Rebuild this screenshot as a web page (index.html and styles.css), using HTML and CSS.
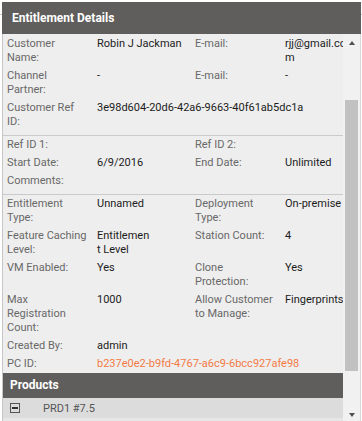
FILE: index.html
```html
<!DOCTYPE html>
<html lang="en">
<head>
  <meta charset="UTF-8">
  <title>Entitlement Details</title>
  <link rel="stylesheet" href="styles.css">
</head>
<body>
  <div class="panel">
    <div class="panel-header">Entitlement Details</div>

    <div class="panel-body">
      <div class="details">
        <div class="section first">
          <div class="row">
            <div class="label">Customer Name:</div>
            <div class="value">Robin J Jackman</div>
            <div class="label">E-mail:</div>
            <div class="value">rjj@gmail.com</div>
          </div>
          <div class="row">
            <div class="label">Channel Partner:</div>
            <div class="value">-</div>
            <div class="label">E-mail:</div>
            <div class="value">-</div>
          </div>
          <div class="row">
            <div class="label">Customer Ref ID:</div>
            <div class="value wide">3e98d604-20d6-42a6-9663-40f61ab5dc1a</div>
          </div>
        </div>

        <div class="section">
          <div class="row">
            <div class="label">Ref ID 1:</div>
            <div class="value"></div>
            <div class="label">Ref ID 2:</div>
            <div class="value"></div>
          </div>
          <div class="row">
            <div class="label">Start Date:</div>
            <div class="value">6/9/2016</div>
            <div class="label">End Date:</div>
            <div class="value">Unlimited</div>
          </div>
          <div class="row">
            <div class="label">Comments:</div>
            <div class="value wide"></div>
          </div>
        </div>

        <div class="section last">
          <div class="row">
            <div class="label">Entitlement Type:</div>
            <div class="value">Unnamed</div>
            <div class="label">Deployment Type:</div>
            <div class="value">On-premise</div>
          </div>
          <div class="row">
            <div class="label loose">Feature Caching Level:</div>
            <div class="value narrow">Entitlement Level</div>
            <div class="label">Station Count:</div>
            <div class="value">4</div>
          </div>
          <div class="row">
            <div class="label">VM Enabled:</div>
            <div class="value">Yes</div>
            <div class="label">Clone Protection:</div>
            <div class="value">Yes</div>
          </div>
          <div class="row">
            <div class="label">Max Registration Count:</div>
            <div class="value">1000</div>
            <div class="label">Allow Customer to Manage:</div>
            <div class="value">Fingerprints</div>
          </div>
          <div class="row">
            <div class="label">Created By:</div>
            <div class="value wide">admin</div>
          </div>
          <div class="row">
            <div class="label">PC ID:</div>
            <div class="value wide link">b237e0e2-b9fd-4767-a6c9-6bcc927afe98</div>
          </div>
        </div>

        <div class="products-header">Products</div>
        <div class="products">
          <div class="product">
            <span class="toggle"></span>
            <span class="product-name">PRD1 #7.5</span>
          </div>
        </div>
      </div>

      <div class="scrollbar">
        <div class="arrow up"></div>
        <div class="track"><div class="thumb"></div></div>
        <div class="arrow down"></div>
      </div>
    </div>
  </div>
</body>
</html>
```

FILE: styles.css
```css
html, body {
  height: 100%;
}

body {
  margin: 0;
  padding: 2px 0 0 2px;
  box-sizing: border-box;
  font-family: Roboto, "Liberation Sans", sans-serif;
  font-size: 11px;
  background: linear-gradient(to bottom, #fff 14px, #c9c9c9 14px, #c9c9c9 15px, #fff 15px);
  overflow: hidden;
}

.panel {
  width: 359px;
}

.panel-header {
  height: 32px;
  line-height: 32px;
  padding-left: 10px;
  background: #5f5e5c;
  color: #fff;
  font-weight: bold;
  font-size: 12px;
}

.panel-body {
  display: flex;
  height: 387px;
  background: #eeeeee;
  border-left: 1px solid #c6c6c6;
  border-right: 1px solid #d8d8d8;
}

.details {
  width: 340px;
  overflow: hidden;
}

.section {
  padding: 0 0 4px 4px;
  border-bottom: 1px solid #cacaca;
  width: 390px;
}

.section.first {
  padding-top: 1px;
}

.section.last {
  padding-bottom: 0;
  border-bottom: none;
}

.row {
  display: grid;
  grid-template-columns: 90px 98px 90px 66px;
  padding: 2px 0;
  line-height: 14px;
}

.label {
  color: #686868;
  padding-right: 11.3px;
}

.label.loose {
  padding-right: 4px;
}

.value {
  color: #1c1c1c;
  word-break: break-all;
}

.value.wide {
  grid-column: span 3;
}

.value.narrow {
  max-width: 54px;
}

.value.link {
  color: #f37a45;
}

.products-header {
  height: 25px;
  line-height: 25px;
  padding-left: 7px;
  background: #5f5e5c;
  color: #fff;
  font-weight: bold;
  font-size: 12px;
}

.products {
  background: #e6e6e6;
  height: 30px;
}

.product {
  display: flex;
  align-items: center;
  height: 20px;
  background: #dcdcdc;
  color: #555;
}

.toggle {
  position: relative;
  width: 8px;
  height: 8px;
  margin-left: 7px;
  border: 1px solid #555;
}

.toggle::after {
  content: "";
  position: absolute;
  left: 1px;
  right: 1px;
  top: 3px;
  height: 2px;
  background: #333;
}

.product-name {
  margin-left: 23px;
}

.scrollbar {
  width: 17px;
  display: flex;
  flex-direction: column;
  background: #f1f1f1;
}

.arrow {
  height: 17px;
  display: flex;
  align-items: center;
  justify-content: center;
}

.arrow::before {
  content: "";
  border-left: 3.5px solid transparent;
  border-right: 3.5px solid transparent;
}

.arrow.up::before {
  border-bottom: 4px solid #505050;
}

.arrow.down::before {
  border-top: 4px solid #505050;
  margin-top: 4px;
}

.track {
  flex: 1;
  padding: 49px 2px 0;
}

.thumb {
  height: 271px;
  background: #c1c1c1;
}
```
